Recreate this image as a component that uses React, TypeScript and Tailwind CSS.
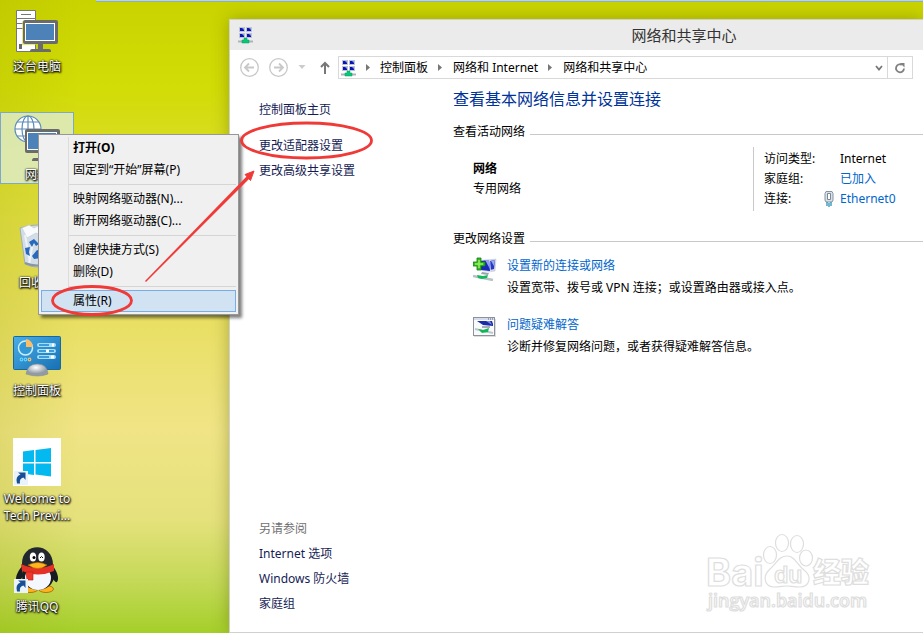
import type { ReactNode } from "react";

function ComputerIcon() {
  return (
    <svg width="48" height="48" viewBox="1 0 48 48" aria-hidden="true" className="shrink-0">
      <path d="M4.500 4.500h19v8h-19z" fill="#fff" stroke="#777" />
      <path d="M4.500 12.500h19v33h-19z" fill="#fff" stroke="#777" />
      <path d="M9 8.500h10M4 17.500h8M4 22.500h8" stroke="#777" />
      <path d="M7 38h3v5H7z" fill="#666" />
      <path d="M10 15h14v24H10z" fill="#d5dc20" opacity=".6" />
      <rect x="11" y="14" width="35" height="24" rx="2" fill="#6b6b6b" />
      <rect x="13.500" y="17.500" width="29" height="17" fill="#4d82b8" stroke="#fff" />
      <path d="M26 38h5v5h6q2 0 2 2v1H18v-1q0-2 2-2h6z" fill="#6b6b6b" />
    </svg>
  );
}

function NetworkIcon() {
  return (
    <svg width="48" height="48" viewBox="0 0 48 48" aria-hidden="true" className="shrink-0">
      <circle cx="15" cy="15" r="13" fill="#fff" />
      <g fill="none" stroke="#5d8cba" strokeWidth="1.200">
        <circle cx="15" cy="15" r="13" />
        <ellipse cx="15" cy="15" rx="6" ry="13" />
        <path d="M15 2v26M2 15h26M4 8h22M4 22h22" />
      </g>
      <rect x="12" y="15" width="35" height="24" rx="2" fill="#6b6b6b" />
      <rect x="14.500" y="18.500" width="29" height="17" fill="#4d82b8" stroke="#fff" />
      <path d="M27 39h5v5h6q2 0 2 3H19q0-3 2-3h6z" fill="#6b6b6b" />
    </svg>
  );
}

function RecycleIcon() {
  return (
    <svg width="48" height="48" viewBox="0 0 48 48" aria-hidden="true" className="shrink-0">
      <path d="M7 6q17-6 34 0l-5 36q-12 6-24 0z" fill="#d3dde6" stroke="#a3adb8" />
      <path d="M9 6l7-3 5 3 8-4 9 4-5 9-10-4-9 5z" fill="#f8fafc" stroke="#c5ced8" strokeWidth=".7" />
      <path d="M12 13l5 27M20 20l-4 22M32 12l-4 30" stroke="#edf3f8" strokeWidth="2" />
      <path d="M16 20l5-3 5 5-3 2-2-3-2 4zM12 26l5-1-1 5 1 4-4-2zM19 34l5-6 4 1v7l-7 1zM27 24l4-3 4 7-5 3z" fill="#2769bd" />
      <path d="M12 41q12 5 24 0" stroke="#8795a5" strokeWidth="2" fill="none" />
    </svg>
  );
}

function ControlPanelIcon() {
  return (
    <svg width="48" height="48" viewBox="0 0 48 48" aria-hidden="true" className="shrink-0">
      <defs>
        <linearGradient id="panelBlue" x2="1" y2="1">
          <stop stopColor="#49aee6" />
          <stop offset="1" stopColor="#1770b4" />
        </linearGradient>
        <radialGradient id="panelStand" cx=".45" cy=".3">
          <stop stopColor="#fff" />
          <stop offset="1" stopColor="#929ba4" />
        </radialGradient>
      </defs>
      <rect x=".5" y="6.500" width="47" height="33" rx="1" fill="url(#panelBlue)" stroke="#1767a2" />
      <circle cx="12.500" cy="18" r="7" fill="#3298d6" stroke="#cdeeff" strokeWidth="1.500" />
      <path d="M13 17V9a8 8 0 0 1 7 8z" fill="#ffbd62" />
      <g fill="none" strokeWidth="1.200">
        <circle cx="8.500" cy="29.500" r="1.300" stroke="#62d3ff" />
        <circle cx="12.500" cy="29.500" r="1.300" stroke="#62d3ff" />
        <circle cx="16.500" cy="29.500" r="1.300" stroke="#ffbd62" />
      </g>
      <path d="M26 15h15M26 21h15M26 27h15" stroke="#a4defa" strokeWidth="4" strokeLinecap="round" />
      <path d="M26 15h10M26 21h7M35 21h6M26 27h10" stroke="#1f86ca" strokeWidth="1.600" />
      <path d="M39 15h2M33 21h3M38 27h3" stroke="#fff" strokeWidth="3" />
      <path d="M13 44q2-11 12-10 9 0 10 10-10 4-22 0z" fill="url(#panelStand)" stroke="#868f96" strokeWidth=".6" />
    </svg>
  );
}

function ShortcutArrow() {
  return (
    <>
      <rect x="1" y="33" width="14" height="14" fill="#eaf3fa" />
      <path d="M4 45.500q-2-7 3.500-9L5 34.500h7.500v7.500l-2-2.500q-4.500 1-3.500 6z" fill="#164f96" />
    </>
  );
}

function WindowsIcon() {
  return (
    <svg width="48" height="48" viewBox="0 0 48 48" aria-hidden="true" className="shrink-0">
      <path fill="#fff" d="M0 0h48v48H0z" />
      <path d="M10 13.500l11-1.500v12H10zM22.500 12L38 10v14H22.500zM10 25.500h11v11.500L10 35.500zM22.500 25.500H38v13l-15.500-2z" fill="#04b9ef" />
      <ShortcutArrow />
    </svg>
  );
}

function QQIcon() {
  return (
    <svg width="48" height="48" viewBox="0 0 48 48" aria-hidden="true" className="shrink-0">
      <ellipse cx="17" cy="43" rx="8" ry="3.500" fill="#ffb41e" stroke="#9a5400" strokeWidth=".7" />
      <ellipse cx="33" cy="43" rx="7.500" ry="3.500" fill="#ffb41e" stroke="#9a5400" strokeWidth=".7" />
      <path d="M9 20C6 24 1 31 4 36q2 1 6-6M40 20c3 4 7 12 4 16q-2 1-6-6" fill="#171b22" />
      <ellipse cx="25" cy="30" rx="16" ry="14" fill="#181c22" />
      <ellipse cx="25" cy="32" rx="13" ry="12" fill="#f4f7fc" />
      <path d="M9 20C7-5 41-5 40 20q-13 9-31 0z" fill="#23272e" />
      <ellipse cx="20" cy="11" rx="3.200" ry="4.500" fill="#fff" />
      <ellipse cx="28.500" cy="11" rx="3.200" ry="4.500" fill="#fff" />
      <circle cx="21" cy="11.500" r="1.500" />
      <path d="M27 12q1.500-3 3 0" stroke="#111" fill="none" />
      <path d="M8 18q17 8 33 0v7q-16 7-32 0z" fill="#e33125" />
      <path d="M13 26h7v8h-6z" fill="#f0382a" stroke="#b51c15" strokeWidth=".6" />
      <path d="M15 19q10-5 19 0-9 7-19 0z" fill="#ffb51d" stroke="#b26b00" strokeWidth=".6" />
      <ShortcutArrow />
    </svg>
  );
}

function ShareCenterIcon() {
  return (
    <svg width="16" height="18" viewBox="0 0 16 18" aria-hidden="true" className="shrink-0">
      {[[1, 1], [8, 1], [1, 7], [8, 7]].map(([x, y]) => (
        <g key={`${x}-${y}`}>
          <path d={`M${x} ${y}h6v5h-6z`} fill="#c0c4d0" />
          <path d={`M${x + 1} ${y + 1}h4v3h-4z`} fill="#0717b5" />
          <path d={`M${x + 3} ${y + 1}h2v2z`} fill="#8d9cf0" />
        </g>
      ))}
      <path d="M0 15.500h15" stroke="#aab5b5" strokeWidth="2" />
      <path d="M6 12h3v2h2v3H4v-3h2z" fill="#07c778" stroke="#089c60" strokeWidth=".5" />
    </svg>
  );
}

function NewConnectionIcon() {
  return (
    <svg width="24" height="24" viewBox="0 0 24 24" aria-hidden="true" className="mt-[2px] shrink-0">
      <path d="M14 3l9-1-1 12-7 1z" fill="#d5d9e4" stroke="#b8becb" strokeWidth=".5" />
      <path d="M17 4l5-1-1 9-4 1z" fill="#2639c6" />
      <path d="M18 4l4-1-1 6z" fill="#98a7ee" />
      <path d="M6 3l11-1 1 13-10-1z" fill="#d8deef" />
      <path d="M7 4l9-1 1 11-9-1z" fill="#1728bd" />
      <path d="M12 3h4l1 9z" fill="#90a0ef" />
      <path d="M9 15l7 1-1 2-7-1z" fill="#9ba4ae" />
      <path d="M0 19l20 4" stroke="#b7c2c5" strokeWidth="2.500" />
      <path d="M4 18l6 1 5-1-1 3-5 1-4-1z" fill="#13b95d" />
      <path d="M4 1h4v4h4v4H8v4H4V9H0V5h4z" fill="#35bd22" stroke="#137d0e" strokeWidth=".8" />
      <path d="M6 3v8M2 7h8" stroke="#9aef62" strokeWidth="1.500" />
    </svg>
  );
}

function TroubleshootIcon() {
  return (
    <svg width="24" height="24" viewBox="0 0 24 24" aria-hidden="true" className="mt-[2px] shrink-0">
      <rect x="1" y="3" width="22" height="18" fill="#ddd" />
      <rect x=".5" y="1.500" width="21" height="18" fill="#f9fafc" stroke="#8b929b" />
      <path d="M1 3h20" stroke="#d6dde9" strokeWidth="2" />
      <path d="M15 3h1M17 3h1M19 3h1" stroke="#57647e" />
      <path d="M4 5h15l1 3v2l-10-1z" fill="#1a2caa" />
      <path d="M13 5h4l2 4z" fill="#7f91de" />
      <path d="M9 10h8v2H9z" fill="#a8adb8" />
      <path d="M2 13l18 4" stroke="#bcc7c9" strokeWidth="2" />
      <path d="M5 13l5 1 6-2-1 4-6 1z" fill="#10b657" />
    </svg>
  );
}

function EthernetIcon() {
  return (
    <svg width="10" height="16" viewBox="0 0 10 16" aria-hidden="true" className="shrink-0">
      <path d="M2 .5h6l1 2V9q0 2-2 2H3q-2 0-2-2V2.500z" fill="#dbe1e6" stroke="#8593a1" />
      <path d="M3.500 2.500h3v6h-3z" fill="#fff" stroke="#778899" />
      <path d="M3 11v4M5 12v4M7 11v4" stroke="#1688b5" strokeWidth="1.200" />
    </svg>
  );
}

function Crumb() {
  return (
    <svg width="5" height="7" viewBox="0 0 5 7" aria-hidden="true" className="shrink-0">
      <path d="M0 0l4 3.500L0 7z" fill="#777" />
    </svg>
  );
}

function DesktopItem({ icon, label, selected }: { icon: ReactNode; label: ReactNode; selected?: boolean }) {
  return (
    <button
      type="button"
      className={`flex h-[72px] w-[74px] shrink-0 flex-col items-center border pt-px text-center text-white [text-shadow:0_1px_2px_#000,1px_1px_2px_#000,0_0_2px_#000] ${
        selected ? "border-[#7da9c9] bg-[#dfecd0]/80" : "border-transparent"
      }`}
    >
      {icon}
      <span className="mt-1 block leading-[17px] whitespace-nowrap">{label}</span>
    </button>
  );
}

function MenuItem({ children, bold, active }: { children: ReactNode; bold?: boolean; active?: boolean }) {
  return (
    <button
      type="button"
      role="menuitem"
      className={`flex h-[22px] w-full items-center border pl-[31px] text-left ${bold ? "font-bold" : ""} ${
        active ? "border-[#78aee5] bg-[#d1e2f2]" : "border-transparent"
      }`}
    >
      {children}
    </button>
  );
}

function MenuSeparator() {
  return <hr className="my-[3px] ml-[28px] border-[#d5d5d5]" />;
}

function ContextMenu() {
  return (
    <div
      role="menu"
      className="absolute top-[134px] left-[38px] w-[201px] border border-[#979797] bg-[#f0f0f0] p-[2px] shadow-[3px_3px_3px_rgba(0,0,0,0.5)]"
    >
      <div className="bg-[linear-gradient(90deg,transparent_27px,#dcdcdc_27px,#dcdcdc_28px,transparent_28px)]">
        <MenuItem bold>打开(O)</MenuItem>
        <MenuItem>固定到“开始”屏幕(P)</MenuItem>
        <MenuSeparator />
        <MenuItem>映射网络驱动器(N)...</MenuItem>
        <MenuItem>断开网络驱动器(C)...</MenuItem>
        <MenuSeparator />
        <MenuItem>创建快捷方式(S)</MenuItem>
        <MenuItem>删除(D)</MenuItem>
        <MenuSeparator />
        <MenuItem active>属性(R)</MenuItem>
      </div>
    </div>
  );
}

function Toolbar() {
  return (
    <nav className="flex h-[35px] items-center pr-[10px] pl-[10px]" aria-label="导航">
      <button type="button" aria-label="后退" className="mr-[10px]">
        <svg width="19" height="19" viewBox="0 0 19 19" fill="none" stroke="#c8c8c8">
          <circle cx="9.500" cy="9.500" r="8.800" strokeWidth="1.300" />
          <path d="M14 9.500H5.500M9 5.500l-4 4 4 4" strokeWidth="1.800" />
        </svg>
      </button>
      <button type="button" aria-label="前进" className="mr-[10px]">
        <svg width="19" height="19" viewBox="0 0 19 19" fill="none" stroke="#c8c8c8">
          <circle cx="9.500" cy="9.500" r="8.800" strokeWidth="1.300" />
          <path d="M5 9.500h8.500M10 5.500l4 4-4 4" strokeWidth="1.800" />
        </svg>
      </button>
      <button type="button" aria-label="最近的位置" className="mr-[14px]">
        <svg width="8" height="5" viewBox="0 0 8 5">
          <path d="M.5 0h7L4 4z" fill="#ccc" />
        </svg>
      </button>
      <button type="button" aria-label="上移" className="mr-[8px]">
        <svg width="10" height="13" viewBox="0 0 10 13" fill="none" stroke="#777" strokeWidth="2">
          <path d="M5 13V2M1 6l4-4 4 4" />
        </svg>
      </button>
      <div className="flex h-[23px] flex-1 items-center border border-[#d9d9d9] pl-[2px]">
        <ShareCenterIcon />
        <div className="flex flex-1 items-center">
          <span className="flex w-[23px] justify-center"><Crumb /></span>
          <button type="button">控制面板</button>
          <span className="flex w-[25px] justify-center"><Crumb /></span>
          <button type="button">网络和 Internet</button>
          <span className="flex w-[25px] justify-center"><Crumb /></span>
          <button type="button">网络和共享中心</button>
        </div>
        <button type="button" aria-label="以前的位置" className="flex h-full w-[17px] items-center justify-center">
          <svg width="8" height="6" viewBox="0 0 8 6" fill="none" stroke="#777" strokeWidth="1.800">
            <path d="M1 1l3 3.500L7 1" />
          </svg>
        </button>
        <button
          type="button"
          aria-label="刷新"
          className="flex h-full w-[25px] items-center justify-center border-l border-[#d9d9d9]"
        >
          <svg width="12" height="12" viewBox="0 0 12 12">
            <path d="M8 2.800A4 4 0 1 0 10 6.500" fill="none" stroke="#808080" strokeWidth="1.800" />
            <path d="M6 1h4.500v4.500z" fill="#808080" />
          </svg>
        </button>
      </div>
    </nav>
  );
}

function SectionTitle({ children }: { children: ReactNode }) {
  return (
    <h2 className="flex h-5 items-center gap-[5px]">
      {children}
      <span className="mt-[5px] h-px flex-1 bg-[#c9c9c9]" />
    </h2>
  );
}

function Task({ icon, title, detail }: { icon: ReactNode; title: string; detail: string }) {
  return (
    <li className="flex items-start gap-[10px]">
      {icon}
      <div className="leading-[22px]">
        <a href="#task" className="block h-[22px] text-[#0066cc]">{title}</a>
        <p>{detail}</p>
      </div>
    </li>
  );
}

function NetworkWindow() {
  return (
    <section className="mt-[19px] flex min-w-0 flex-1 flex-col border border-r-0 border-[#d0d0d0] bg-white shadow-[0_0_16px_rgba(80,90,0,0.4)]">
      <header className="flex h-[30px] items-center bg-[#ebebeb] pl-[8px]">
        <ShareCenterIcon />
        <h1 className="flex-1 pl-[191px] text-center text-[15px] text-[#333]">网络和共享中心</h1>
      </header>
      <Toolbar />
      <div className="flex flex-1">
        <aside className="flex w-[223px] shrink-0 flex-col justify-between pt-[12px] pb-[16px] pl-[29px] text-[#151c55]">
          <ul className="leading-[25px]">
            <li className="mb-[11px]"><a href="#home">控制面板主页</a></li>
            <li><a href="#adapter">更改适配器设置</a></li>
            <li><a href="#sharing">更改高级共享设置</a></li>
          </ul>
          <ul className="leading-[25px]">
            <li className="text-[#707070]">另请参阅</li>
            <li><a href="#internet">Internet 选项</a></li>
            <li><a href="#firewall">Windows 防火墙</a></li>
            <li><a href="#homegroup">家庭组</a></li>
          </ul>
        </aside>
        <div className="min-w-0 flex-1 pt-[2px]">
          <h2 className="text-base leading-6 text-[#003399]">查看基本网络信息并设置连接</h2>
          <div className="mt-[11px]"><SectionTitle>查看活动网络</SectionTitle></div>
          <div className="mt-[5px] flex">
            <div className="w-[300px] pt-[12px] pl-5 leading-5">
              <p className="font-bold">网络</p>
              <p>专用网络</p>
            </div>
            <dl className="grid h-16 grid-cols-[70px_auto] content-start gap-x-[6px] border-l border-[#c9c9c9] pt-[2px] pl-[10px] leading-5">
              <dt>访问类型:</dt>
              <dd>Internet</dd>
              <dt>家庭组:</dt>
              <dd><a href="#joined" className="text-[#0066cc]">已加入</a></dd>
              <dt className="flex items-center justify-between">连接:<EthernetIcon /></dt>
              <dd><a href="#ethernet" className="text-[#0066cc]">Ethernet0</a></dd>
            </dl>
          </div>
          <div className="mt-[18px]"><SectionTitle>更改网络设置</SectionTitle></div>
          <ul className="mt-[6px] flex flex-col gap-[15px] pl-5">
            <Task icon={<NewConnectionIcon />} title="设置新的连接或网络" detail="设置宽带、拨号或 VPN 连接；或设置路由器或接入点。" />
            <Task icon={<TroubleshootIcon />} title="问题疑难解答" detail="诊断并修复网络问题，或者获得疑难解答信息。" />
          </ul>
        </div>
      </div>
    </section>
  );
}

function Watermark() {
  return (
    <svg
      className="pointer-events-none absolute right-[45px] bottom-[16px]"
      width="175"
      height="90"
      viewBox="0 0 175 90"
      fill="#fff"
      stroke="#dedede"
      strokeWidth="1.200"
    >
      <text x="3" y="59" fontSize="38" fontWeight="700" fontFamily="Inter, sans-serif">Bai</text>
      <ellipse cx="67" cy="28" rx="6.500" ry="8.500" />
      <ellipse cx="79" cy="16" rx="6.500" ry="8.500" />
      <ellipse cx="94" cy="17" rx="6.500" ry="8.500" />
      <ellipse cx="103" cy="31" rx="6.500" ry="8" />
      <path d="M84 29c8 0 10 9 17 14 9 7 5 17-4 17-7 0-9-1-13-1s-7 1-13 1c-9 0-12-10-5-17 7-6 10-14 18-14z" />
      <text x="71" y="56" fontSize="23" fontWeight="600" fontFamily="Inter, sans-serif">du</text>
      <text x="110" y="56" fontSize="28" fontWeight="900" fontFamily="'Noto Sans CJK SC', sans-serif">经验</text>
      <text x="5" y="80" fontSize="18" fontWeight="600" fontFamily="'Open Sans', sans-serif">jingyan.baidu.com</text>
    </svg>
  );
}

function Annotations() {
  return (
    <svg
      className="pointer-events-none absolute top-0 left-0"
      width="400"
      height="330"
      viewBox="0 0 400 330"
      fill="none"
      stroke="#f03a38"
      strokeWidth="2.800"
    >
      <ellipse cx="92" cy="300.500" rx="39.500" ry="14" />
      <ellipse cx="306.500" cy="140.500" rx="65" ry="17.500" />
      <path d="M145 281l102-105 2.500 2.500L146 282z" fill="#f03a38" stroke="none" />
      <path d="M254 171l-9 3.500 5.500 6z" fill="#f03a38" stroke="#f03a38" strokeWidth="1" />
    </svg>
  );
}

export default function App() {
  return (
    <main className="relative flex h-screen min-h-[620px] overflow-hidden bg-[linear-gradient(90deg,rgba(150,160,0,0.16),transparent_80px),linear-gradient(180deg,#c9d300_0%,#d2dc06_14%,#e1de42_34%,#e8df62_50%,#f0e486_68%,#e5e17c_82%,#c4d957_92%,#a4cf29_100%)] font-['Noto_Sans','Noto_Sans_CJK_SC',sans-serif] text-xs text-black">
      <div className="absolute top-0 right-0 left-[96px] h-[2px] border-b border-[#94b1a0] bg-[#b5d3ee]" />
      <div className="flex w-[229px] shrink-0 flex-col gap-9 pt-1">
        <DesktopItem icon={<ComputerIcon />} label="这台电脑" />
        <DesktopItem icon={<NetworkIcon />} label="网络" selected />
        <DesktopItem icon={<RecycleIcon />} label="回收站" />
        <DesktopItem icon={<ControlPanelIcon />} label="控制面板" />
        <DesktopItem icon={<WindowsIcon />} label={<>Welcome to<br />Tech Previ...</>} />
        <DesktopItem icon={<QQIcon />} label="腾讯QQ" />
      </div>
      <NetworkWindow />
      <ContextMenu />
      <Watermark />
      <Annotations />
    </main>
  );
}
